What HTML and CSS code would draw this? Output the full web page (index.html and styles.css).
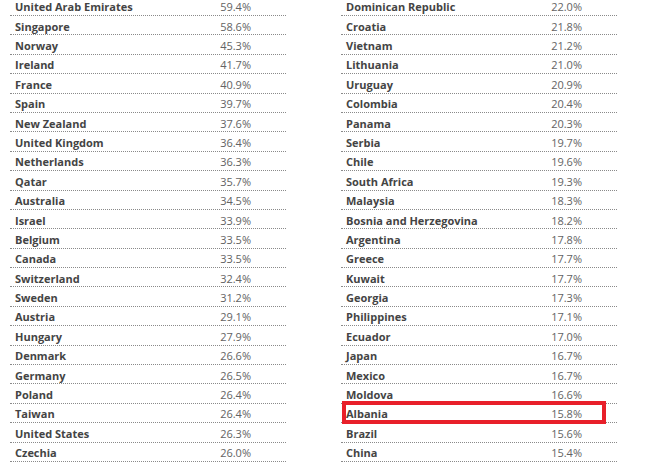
FILE: index.html
```html
<!DOCTYPE html>
<html>
<head>
<meta charset="utf-8">
<link rel="stylesheet" href="styles.css">
</head>
<body>
<div class="wrap">
  <div class="table">
    <div class="row"><span class="name">United Arab Emirates</span><span class="val">59.4%</span></div>
    <div class="row"><span class="name">Singapore</span><span class="val">58.6%</span></div>
    <div class="row"><span class="name">Norway</span><span class="val">45.3%</span></div>
    <div class="row"><span class="name">Ireland</span><span class="val">41.7%</span></div>
    <div class="row"><span class="name">France</span><span class="val">40.9%</span></div>
    <div class="row"><span class="name">Spain</span><span class="val">39.7%</span></div>
    <div class="row"><span class="name">New Zealand</span><span class="val">37.6%</span></div>
    <div class="row"><span class="name">United Kingdom</span><span class="val">36.4%</span></div>
    <div class="row"><span class="name">Netherlands</span><span class="val">36.3%</span></div>
    <div class="row"><span class="name">Qatar</span><span class="val">35.7%</span></div>
    <div class="row"><span class="name">Australia</span><span class="val">34.5%</span></div>
    <div class="row"><span class="name">Israel</span><span class="val">33.9%</span></div>
    <div class="row"><span class="name">Belgium</span><span class="val">33.5%</span></div>
    <div class="row"><span class="name">Canada</span><span class="val">33.5%</span></div>
    <div class="row"><span class="name">Switzerland</span><span class="val">32.4%</span></div>
    <div class="row"><span class="name">Sweden</span><span class="val">31.2%</span></div>
    <div class="row"><span class="name">Austria</span><span class="val">29.1%</span></div>
    <div class="row"><span class="name">Hungary</span><span class="val">27.9%</span></div>
    <div class="row"><span class="name">Denmark</span><span class="val">26.6%</span></div>
    <div class="row"><span class="name">Germany</span><span class="val">26.5%</span></div>
    <div class="row"><span class="name">Poland</span><span class="val">26.4%</span></div>
    <div class="row"><span class="name">Taiwan</span><span class="val">26.4%</span></div>
    <div class="row"><span class="name">United States</span><span class="val">26.3%</span></div>
    <div class="row"><span class="name">Czechia</span><span class="val">26.0%</span></div>
  </div>
  <div class="table">
    <div class="row"><span class="name">Dominican Republic</span><span class="val">22.0%</span></div>
    <div class="row"><span class="name">Croatia</span><span class="val">21.8%</span></div>
    <div class="row"><span class="name">Vietnam</span><span class="val">21.2%</span></div>
    <div class="row"><span class="name">Lithuania</span><span class="val">21.0%</span></div>
    <div class="row"><span class="name">Uruguay</span><span class="val">20.9%</span></div>
    <div class="row"><span class="name">Colombia</span><span class="val">20.4%</span></div>
    <div class="row"><span class="name">Panama</span><span class="val">20.3%</span></div>
    <div class="row"><span class="name">Serbia</span><span class="val">19.7%</span></div>
    <div class="row"><span class="name">Chile</span><span class="val">19.6%</span></div>
    <div class="row"><span class="name">South Africa</span><span class="val">19.3%</span></div>
    <div class="row"><span class="name">Malaysia</span><span class="val">18.3%</span></div>
    <div class="row"><span class="name">Bosnia and Herzegovina</span><span class="val">18.2%</span></div>
    <div class="row"><span class="name">Argentina</span><span class="val">17.8%</span></div>
    <div class="row"><span class="name">Greece</span><span class="val">17.7%</span></div>
    <div class="row"><span class="name">Kuwait</span><span class="val">17.7%</span></div>
    <div class="row"><span class="name">Georgia</span><span class="val">17.3%</span></div>
    <div class="row"><span class="name">Philippines</span><span class="val">17.1%</span></div>
    <div class="row"><span class="name">Ecuador</span><span class="val">17.0%</span></div>
    <div class="row"><span class="name">Japan</span><span class="val">16.7%</span></div>
    <div class="row"><span class="name">Mexico</span><span class="val">16.7%</span></div>
    <div class="row"><span class="name">Moldova</span><span class="val">16.6%</span></div>
    <div class="row highlight"><span class="name">Albania</span><span class="val">15.8%</span></div>
    <div class="row"><span class="name">Brazil</span><span class="val">15.6%</span></div>
    <div class="row"><span class="name">China</span><span class="val">15.4%</span></div>
  </div>
</div>
</body>
</html>
```
FILE: styles.css
```css
html, body {
  margin: 0;
  padding: 0;
  background: #ffffff;
  overflow: hidden;
}
.wrap {
  display: flex;
  gap: 55px;
  padding-left: 10px;
  margin-top: -3.4px;
  font-family: "Open Sans", "Noto Sans", sans-serif;
}
.table {
  width: 276px;
  display: flex;
  flex-direction: column;
}
.row {
  position: relative;
  box-sizing: border-box;
  height: 19.4px;
  border-bottom: 1px dotted #8a8a8a;
  display: flex;
  align-items: baseline;
  justify-content: space-between;
  padding: 3.6px 35px 0 5px;
}
.name {
  font-size: 11px;
  line-height: 14px;
  font-weight: 700;
  color: #444444;
}
.val {
  font-size: 11px;
  line-height: 14px;
  color: #636363;
}
.highlight::after {
  content: "";
  position: absolute;
  left: 1px;
  top: -2.6px;
  width: 256px;
  height: 15px;
  border: 4px solid #e8202a;
}
```
